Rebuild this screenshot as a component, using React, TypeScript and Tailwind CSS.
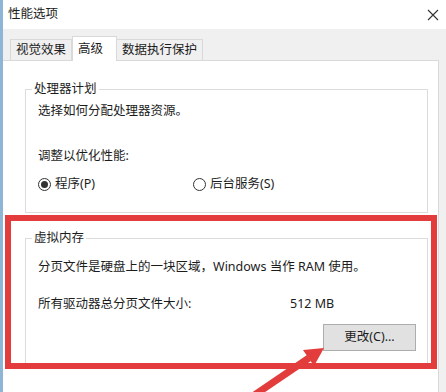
import React from 'react';

function Radio({ checked, label }: { checked?: boolean; label: string }) {
  return (
    <div className="flex items-center gap-[4px]">
      <span className="w-[13px] h-[13px] rounded-full border border-[#333] bg-white flex items-center justify-center">
        {checked && <span className="w-[7px] h-[7px] rounded-full bg-[#333]" />}
      </span>
      <span>{label}</span>
    </div>
  );
}

function GroupBox({ title, children, className }: { title: string; children: React.ReactNode; className?: string }) {
  return (
    <fieldset className={`border border-[#dcdcdc] ${className ?? ''}`}>
      <legend className="ml-[6px] px-[2px] leading-[16px]">{title}</legend>
      {children}
    </fieldset>
  );
}

export default function App() {
  return (
    <div className="relative w-[446px] h-[392px] overflow-hidden bg-[#f0f0f0] border-l-[3px] border-[#8db6d6] font-['Noto_Sans','Noto_Sans_CJK_SC',sans-serif] text-[12.5px] text-[#1c1c1c]">
      {/* title bar */}
      <div className="h-[29px] bg-white flex items-center justify-between pl-[5px] pr-[6px]">
        <span>性能选项</span>
        <svg width="12" height="12" viewBox="0 0 12 12" className="mr-[1px]">
          <path d="M1 1L11 11M11 1L1 11" stroke="#333" strokeWidth="1.1" />
        </svg>
      </div>

      {/* tabs */}
      <div className="flex items-end h-[31px] pl-[7px]">
        <div className="h-[21px] px-[5px] flex items-center border border-b-0 border-[#d9d9d9] bg-[#f0f0f0]">视觉效果</div>
        <div className="h-[25px] px-[5px] w-[45px] flex items-start pt-[3px] bg-white border border-b-0 border-[#d9d9d9] -mb-px relative z-10">高级</div>
        <div className="h-[21px] px-[5px] flex items-center border border-b-0 border-l-0 border-[#d9d9d9] bg-[#f0f0f0]">数据执行保护</div>
      </div>

      {/* panel */}
      <div className="bg-white border-t border-r border-[#d9d9d9] mr-[7px] h-[340px] pt-[20px] pl-[22px] pr-[10px]">
        <GroupBox title="处理器计划" className="pb-[20px]">
          <div className="pl-[12px]">
            <div className="mt-[6px] leading-[16px]">选择如何分配处理器资源。</div>
            <div className="mt-[29px] leading-[16px]">调整以优化性能:</div>
            <div className="mt-[12px] leading-[16px] flex">
              <div className="w-[155px]">
                <Radio checked label="程序(P)" />
              </div>
              <Radio label="后台服务(S)" />
            </div>
          </div>
        </GroupBox>

        <GroupBox title="虚拟内存" className="mt-[17px] pb-[16px]">
          <div className="pl-[12px] pr-[11px]">
            <div className="mt-[13px] leading-[16px]">分页文件是硬盘上的一块区域，Windows 当作 RAM 使用。</div>
            <div className="mt-[21px] leading-[16px] flex">
              <span className="w-[252px]">所有驱动器总分页文件大小:</span>
              <span>512 MB</span>
            </div>
            <div className="mt-[12px] flex justify-end">
              <button className="w-[93px] h-[27px] bg-[#e1e1e1] border border-[#adadad] text-[12.5px] text-[#1c1c1c]">更改(C)...</button>
            </div>
          </div>
        </GroupBox>
      </div>

      {/* annotation: red frame and arrow */}
      <div className="absolute left-[2px] top-[215px] w-[432px] h-[154px] border-[6px] border-[#e23c3c] pointer-events-none" />
      <svg className="absolute left-0 top-0 pointer-events-none" width="446" height="392" viewBox="0 0 446 392">
        <line x1="250" y1="396" x2="306" y2="358" stroke="#e23c3c" strokeWidth="7" />
        <polygon points="321,348 311,366 300,350" fill="#e23c3c" />
      </svg>
    </div>
  );
}
